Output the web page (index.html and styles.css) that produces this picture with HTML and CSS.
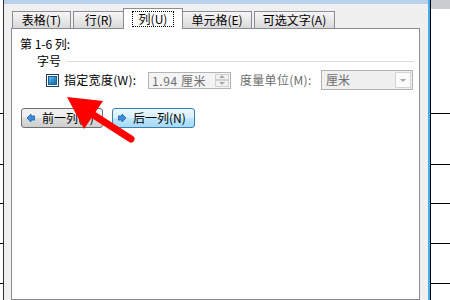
FILE: index.html
```html
<!DOCTYPE html>
<html lang="zh-CN">
<head>
    <meta charset="UTF-8">
    <meta name="viewport" content="width=device-width, initial-scale=1.0">
    <title>表格属性</title>
    <link rel="stylesheet" href="styles.css">
</head>
<body>

<div class="screen">
    <div class="doc doc-left">
        <div class="cell cell-top"></div>
        <div class="cell cell-wide"></div>
        <div class="cell cell-short"></div>
        <div class="cell"></div>
        <div class="cell"></div>
    </div>

    <div class="dialog">
        <div class="dialog-top"></div>
        <div class="dialog-body">
            <div class="tabs">
                <div class="tab tab-table">表格(<u>T</u>)</div>
                <div class="tab tab-row">行(<u>R</u>)</div>
                <div class="tab tab-col active"><span class="focus">列(<u>U</u>)</span></div>
                <div class="tab tab-cell">单元格(<u>E</u>)</div>
                <div class="tab tab-alt">可选文字(<u>A</u>)</div>
            </div>

            <div class="panel">
                <div class="caption">第 1-6 列:</div>

                <div class="group-head">
                    <span>字号</span>
                    <span class="group-line"></span>
                </div>

                <div class="field-row">
                    <span class="checkbox"><span class="checkbox-fill"></span></span>
                    <span class="label">指定宽度(<u>W</u>):</span>
                    <span class="spin-input">
                        <span class="spin-value">1.94 厘米</span>
                        <span class="spin-btns">
                            <span class="spin-btn"><span class="tri-up"></span></span>
                            <span class="spin-btn"><span class="tri-down"></span></span>
                        </span>
                    </span>
                    <span class="label label-disabled">度量单位(<u>M</u>):</span>
                    <span class="select">
                        <span class="select-value">厘米</span>
                        <span class="select-btn"><span class="tri-down"></span></span>
                    </span>
                </div>

                <div class="btn-row">
                    <button class="btn">
                        <svg class="btn-icon" width="8" height="8" viewBox="0 0 8 8">
                            <polygon points="0,4 4,0 4,2 8,2 8,6 4,6 4,8" fill="#3a8ee0" stroke="#1d5fa6" stroke-width="0.8"/>
                        </svg>
                        前一列(<u>P</u>)
                    </button>
                    <button class="btn btn-hot">
                        <svg class="btn-icon" width="8" height="8" viewBox="0 0 8 8">
                            <polygon points="8,4 4,0 4,2 0,2 0,6 4,6 4,8" fill="#3a8ee0" stroke="#1d5fa6" stroke-width="0.8"/>
                        </svg>
                        后一列(<u>N</u>)
                    </button>
                </div>
            </div>
        </div>
    </div>

    <div class="doc doc-right">
        <div class="ruler"></div>
        <div class="cell cell-top"></div>
        <div class="cell cell-wide"></div>
        <div class="cell cell-short"></div>
        <div class="cell"></div>
        <div class="cell"></div>
    </div>

    <!-- red annotation arrow drawn over the dialog -->
    <svg class="pointer" width="450" height="300" viewBox="0 0 450 300">
        <line x1="92" y1="114" x2="131" y2="139" stroke="#ff0000" stroke-width="7" stroke-linecap="round"/>
        <polygon points="67,97 103,101 84,129" fill="#ff0000"/>
    </svg>
</div>

</body>
</html>
```

FILE: styles.css
```css
* {
    box-sizing: border-box;
}
body {
    margin: 0;
    width: 450px;
    height: 300px;
    overflow: hidden;
    background: #fff;
    font-family: "Noto Sans CJK SC", "Liberation Sans", sans-serif;
    font-size: 12px;
    color: #000;
}
u {
    text-decoration: none;
}
.screen {
    position: relative;
    display: flex;
    height: 300px;
}

/* document behind the dialog */
.doc {
    display: flex;
    flex-direction: column;
    background: #fff;
}
.doc-left {
    width: 3px;
}
.doc-right {
    flex: 1;
    border-left: 1px solid #000;
}
.ruler {
    height: 9px;
    flex: none;
    background: #c9cdd2;
}
.cell {
    flex: none;
    height: 40px;
    border-bottom: 1px solid #000;
}
.cell-top {
    height: 114px;
}
.doc-right .cell-top {
    height: 105px;
}
.cell-wide {
    height: 51px;
}
.cell-short {
    height: 39px;
}

/* dialog */
.dialog {
    width: 427px;
    display: flex;
    flex-direction: column;
    border-left: 1px solid #2e2e2e;
    border-right: 2px solid #42b0e6;
}
.dialog-top {
    height: 4px;
    background: #b9d1ea;
}
.dialog-body {
    flex: 1;
    display: flex;
    flex-direction: column;
    padding: 4px 8px 0 7px;
    background: #f0f0f0;
}

/* tabs */
.tabs {
    position: relative;
    z-index: 1;
    display: flex;
    align-items: flex-end;
    height: 21px;
    margin-bottom: -1px;
    padding-left: 1px;
}
.tab {
    display: flex;
    align-items: center;
    justify-content: center;
    height: 17px;
    margin: 0 2px 1px 0;
    border: 1px solid #898c95;
    border-bottom: none;
    background: linear-gradient(#f6f6f6, #e8e8e8 50%, #d9d9d9);
    line-height: 14px;
    white-space: nowrap;
}
.tab-table { width: 59px; }
.tab-row { width: 51px; }
.tab-col { width: 60px; }
.tab-cell { width: 70px; }
.tab-alt { width: 81px; }
.tab.active {
    height: 21px;
    margin: 0 -1px 0 -3px;
    background: #fff;
    align-items: flex-start;
    padding-top: 3px;
}
.focus {
    outline: 1px dotted #000;
    padding: 0 6px;
    line-height: 14px;
}

/* panel */
.panel {
    flex: 1;
    background: #fff;
    border: 1px solid #898c95;
    padding: 8px 0 0 8px;
}
.caption {
    line-height: 14px;
}
.group-head {
    display: flex;
    align-items: center;
    margin-top: 3px;
    padding-left: 17px;
    line-height: 14px;
}
.group-line {
    flex: 1;
    height: 1px;
    margin: 0 5px 0 6px;
    background: #d5dfe5;
}
.field-row {
    display: flex;
    align-items: center;
    height: 20px;
    margin-top: 2px;
    padding-left: 26px;
}
.checkbox {
    flex: none;
    width: 13px;
    height: 13px;
    padding: 1px;
    border: 1px solid #1c3f5a;
    background: #fff;
}
.checkbox-fill {
    display: block;
    width: 9px;
    height: 9px;
    border: 1px solid #1d5d8c;
    background: linear-gradient(135deg, #6cc0ee, #2a86c8 60%, #1c6aa8);
}
.label {
    flex: none;
    width: 84px;
    margin-left: 5px;
    line-height: 14px;
    letter-spacing: 0.3px;
    white-space: nowrap;
}
.label-disabled {
    width: 81px;
    margin-left: 9px;
    color: #6d6d6d;
}
.spin-input {
    flex: none;
    display: flex;
    width: 83px;
    height: 17px;
    border: 1px solid #b4b4b4;
    background: #f4f4f4;
}
.spin-value {
    flex: 1;
    padding-left: 3px;
    color: #6d6d6d;
    line-height: 15px;
    letter-spacing: 0.6px;
}
.spin-btns {
    display: flex;
    flex-direction: column;
    width: 16px;
    padding: 1px;
}
.spin-btn {
    flex: 1;
    display: flex;
    align-items: center;
    justify-content: center;
    border: 1px solid #d0d0d0;
    background: #f2f2f2;
}
.tri-up,
.tri-down {
    width: 0;
    height: 0;
    border-left: 3px solid transparent;
    border-right: 3px solid transparent;
}
.tri-up {
    border-bottom: 3px solid #a8a8a8;
}
.tri-down {
    border-top: 3px solid #a8a8a8;
}
.select {
    flex: none;
    display: flex;
    width: 92px;
    height: 20px;
    border: 1px solid #adb2b5;
    background: #f0f0f0;
}
.select-value {
    flex: 1;
    padding-left: 4px;
    color: #6d6d6d;
    line-height: 18px;
}
.select-btn {
    display: flex;
    align-items: center;
    justify-content: center;
    width: 16px;
    margin: 1px;
    border: 1px solid #d5d5d5;
    background: #fbfbfb;
}

/* buttons */
.btn-row {
    display: flex;
    gap: 9px;
    margin-top: 18px;
    padding-left: 1px;
}
.btn {
    display: flex;
    align-items: center;
    width: 82px;
    height: 20px;
    padding: 0 0 0 5px;
    border: 1px solid #707070;
    border-radius: 3px;
    background: linear-gradient(#f2f2f2, #ebebeb 50%, #dddddd 50%, #cfcfcf);
    font-family: inherit;
    font-size: 12px;
    color: #000;
    line-height: 14px;
    white-space: nowrap;
}
.btn-hot {
    width: 83px;
    border-color: #3c7fb1;
    background: linear-gradient(#eaf6fd, #d9f0fc 50%, #bee6fd 50%, #a7d9f5);
}
.btn-icon {
    margin-right: 7px;
}

.pointer {
    position: absolute;
    top: 0;
    left: 0;
    pointer-events: none;
}
```
